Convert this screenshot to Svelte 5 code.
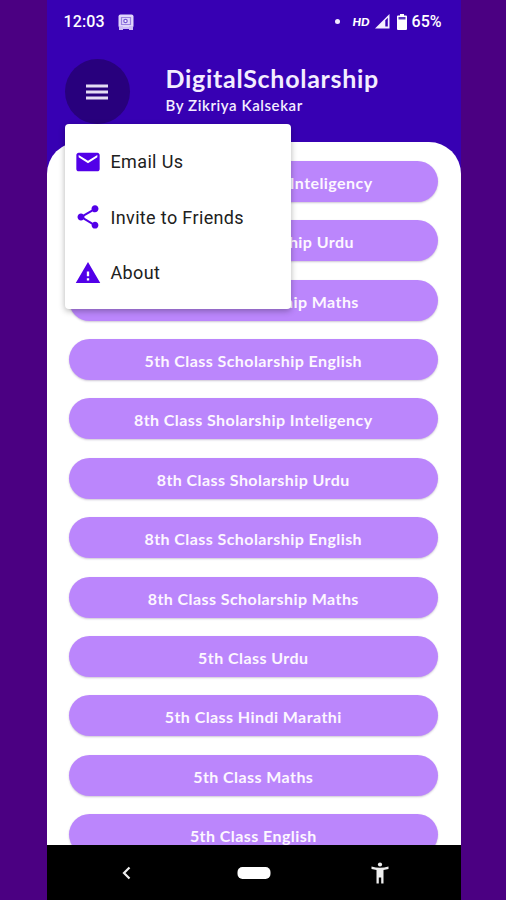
<script>
  const classes = [
    '5th Class Sholarship Inteligency',
    '5th Class Scholarship Urdu',
    '5th Class Scholarship Maths',
    '5th Class Scholarship English',
    '8th Class Sholarship Inteligency',
    '8th Class Sholarship Urdu',
    '8th Class Scholarship English',
    '8th Class Scholarship Maths',
    '5th Class Urdu',
    '5th Class Hindi Marathi',
    '5th Class Maths',
    '5th Class English'
  ];
  const menu = [
    { label: 'Email Us', icon: 'M20 4H4c-1.1 0-1.99.9-1.99 2L2 18c0 1.100.9 2 2 2h16c1.100 0 2-.9 2-2V6c0-1.100-.9-2-2-2zm0 4l-8 5-8-5V6l8 5 8-5v2z' },
    { label: 'Invite to Friends', icon: 'M18 16.080c-.76 0-1.440.3-1.960.77L8.910 12.700c.05-.23.09-.46.09-.7s-.04-.47-.09-.7l7.050-4.110c.54.5 1.250.81 2.040.81 1.660 0 3-1.340 3-3s-1.340-3-3-3-3 1.340-3 3c0 .24.04.47.09.7L8.040 9.810C7.500 9.310 6.790 9 6 9c-1.660 0-3 1.340-3 3s1.340 3 3 3c.79 0 1.500-.31 2.040-.81l7.120 4.160c-.05.21-.08.43-.08.65 0 1.610 1.310 2.920 2.920 2.920s2.920-1.310 2.920-2.920-1.310-2.920-2.920-2.920z' },
    { label: 'About', icon: 'M1.500 20.500h21L12 2.500zM13 18.500h-2v-2h2zM13 14.700h-2v-4h2z' }
  ];
</script>

<div class="page">
  <div class="phone">
    <div class="status">
      <span class="time">12:03</span>
      <svg class="note" width="16" height="16" viewBox="0 0 16 16">
        <rect x=".5" y=".5" width="15" height="13.500" rx="2" fill="#e0d5fb" />
        <path d="M1 12h4v4H1zM11 12h4v4h-4zM5 13h6v2H5z" fill="#cdbdf5" />
        <path d="M3.500 3.500h9v7h-9z" fill="none" stroke="#9a80e0" stroke-width="1.200" />
        <circle cx="7.500" cy="7" r="2.300" fill="#7657d4" />
        <circle cx="7.500" cy="7" r="1.100" fill="#fff" />
      </svg>
      <span class="dot"></span>
      <span class="hd">HD</span>
      <svg class="signal" width="15" height="15" viewBox="0 0 15 15">
        <path d="M0 14.500L14.500 0v14.500z" fill="#f4efff" />
        <path d="M10.300 6.200l2.500-2.500v8.800h-2.500z" fill="#3700b3" />
      </svg>
      <svg class="battery" width="10" height="16" viewBox="0 0 10 16">
        <path d="M3 0h4v1.500h2q1 0 1 1V15q0 1-1 1H1q-1 0-1-1V2.500q0-1 1-1h2z" fill="#fff" />
        <path d="M1.500 3h7v2.500h-7z" fill="#5b32c4" />
      </svg>
      <span class="percent">65%</span>
    </div>

    <header>
      <div class="burger">
        <svg width="22" height="16" viewBox="0 0 22 16">
          <path d="M0 2h22M0 8h22M0 14h22" stroke="#e4dcf4" stroke-width="2.800" />
        </svg>
        <div class="menu">
          {#each menu as item}
            <div class="item">
              <svg width="28" height="28" viewBox="0 0 24 24"><path d={item.icon} fill="#5200e8" fill-rule="evenodd" /></svg>
              <span>{item.label}</span>
            </div>
          {/each}
        </div>
      </div>
      <div class="titles">
        <h1>DigitalScholarship</h1>
        <p>By Zikriya Kalsekar</p>
      </div>
    </header>

    <main>
      {#each classes as name}
        <div class="pill"><span>{name}</span></div>
      {/each}
    </main>

    <nav>
      <svg width="414" height="55" viewBox="0 0 414 55">
        <path d="M82.500 22.500L77 28l5.500 5.500" fill="none" stroke="#eee" stroke-width="2.200" />
        <rect x="190.500" y="22" width="33" height="12" rx="5" fill="#fff" />
        <circle cx="333" cy="19.500" r="2.100" fill="#eee" />
        <path d="M324.500 21.500Q333 24 341.500 21.500V24L336.500 25V38.500H334.200V32.500H331.800V38.500H329.500V25L324.500 24z" fill="#eee" />
      </svg>
    </nav>
  </div>
</div>

<style>
  .page {
    height: 900px;
    display: flex;
    justify-content: center;
    background: #4b0082;
    overflow: hidden;
  }
  .phone {
    width: 414px;
    height: 900px;
    margin-left: 1px;
    display: flex;
    flex-direction: column;
    background: #3700b3;
  }
  .status {
    height: 42px;
    padding: 1px 19px 0 17px;
    display: flex;
    align-items: center;
    flex: none;
    box-sizing: border-box;
    color: #fff;
    font: 500 16px/40px Roboto, sans-serif;
  }
  .time { padding-top: 1px; letter-spacing: .1px; }
  .percent { padding-top: 1px; }
  .note { margin-left: 13px; }
  .dot { width: 5px; height: 5px; border-radius: 50%; background: #f1ebff; margin-left: auto; }
  .hd { font: italic 900 12px/40px Lato, sans-serif; margin-left: 12px; }
  .signal { margin-left: 5px; }
  .battery { margin: 0 5px 0 7px; }
  header {
    height: 100px;
    flex: none;
    display: flex;
    padding-left: 18px;
    color: #f3edff;
  }
  .burger {
    position: relative;
    width: 65px;
    height: 65px;
    margin-top: 17px;
    border-radius: 50%;
    background: #28007d;
    display: flex;
    align-items: center;
    justify-content: center;
  }
  .menu {
    position: absolute;
    z-index: 2;
    left: 0;
    top: 65px;
    width: 226px;
    height: 185px;
    box-sizing: border-box;
    padding-top: 10px;
    border-radius: 4px;
    background: #fff;
    box-shadow: 0 2px 6px rgba(0, 0, 0, .3);
  }
  .item {
    height: 55.500px;
    display: flex;
    align-items: center;
    padding-left: 9px;
    gap: 9px;
    color: #202020;
    font: 400 18px/1 Roboto, sans-serif;
    letter-spacing: .36px;
  }
  .item span { padding-top: 1px; }
  .titles { margin-left: 36px; padding-top: 20px; white-space: nowrap; }
  h1 { margin: 0; font: 700 25px/32px Lato, sans-serif; letter-spacing: .7px; }
  p { margin: 0; font: 600 15px/23px Lato, sans-serif; letter-spacing: .58px; }
  main {
    flex: 1;
    min-height: 0;
    overflow: hidden;
    box-sizing: border-box;
    padding: 18.700px 23px 0 22.500px;
    display: flex;
    flex-direction: column;
    gap: 18.430px;
    border-radius: 32px 32px 0 0;
    background: #fff;
  }
  .pill {
    height: 41px;
    flex: none;
    display: flex;
    align-items: center;
    justify-content: center;
    border-radius: 21px;
    background: #bb86fc;
    box-shadow: 0 1px 2px rgba(60, 30, 90, .25);
    color: #fdf7ff;
    font: 700 16px/20px Lato, sans-serif;
    letter-spacing: .43px;
    white-space: nowrap;
  }
  .pill span { padding-top: 3px; }
  nav { height: 55px; flex: none; background: #000; }
  nav svg { display: block; }
</style>
